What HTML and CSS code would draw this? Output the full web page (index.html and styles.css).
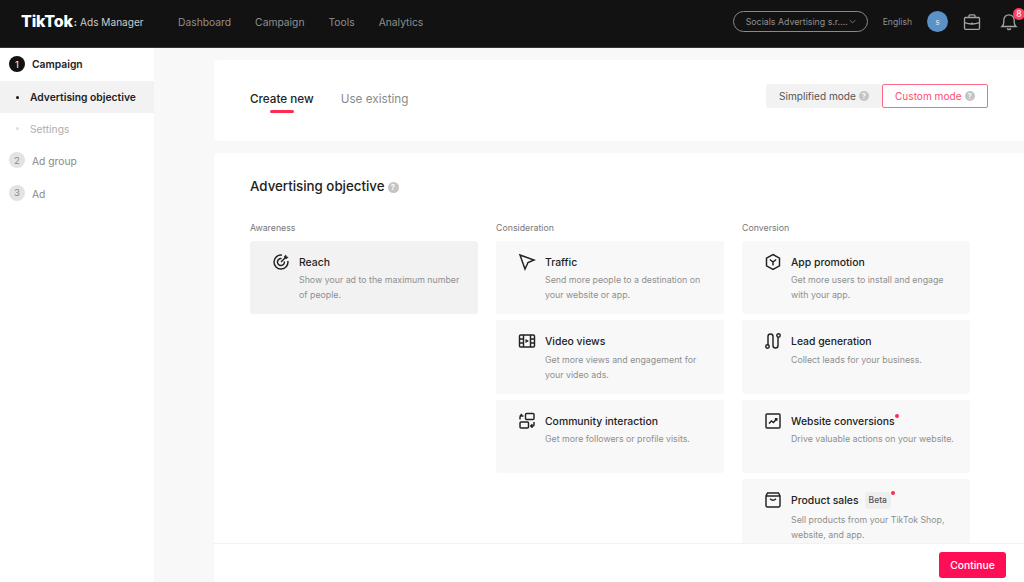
FILE: index.html
```html
<!DOCTYPE html>
<html lang="en">
<head>
<meta charset="utf-8">
<title>TikTok Ads Manager</title>
<link rel="stylesheet" href="styles.css">
</head>
<body>
<header class="topbar">
  <div class="brand"><span class="brand-mark">TikTok</span><span class="brand-colon">:</span><span class="brand-name">Ads Manager</span></div>
  <nav class="topnav">
    <span>Dashboard</span><span>Campaign</span><span>Tools</span><span>Analytics</span>
  </nav>
  <div class="top-right">
    <div class="account"><span class="account-name">Socials Advertising s.r....</span>
      <svg class="chev" viewBox="0 0 10 6"><path d="M1 1l4 4 4-4"/></svg>
    </div>
    <span class="lang">English</span>
    <span class="avatar">s</span>
    <svg class="top-icon" viewBox="0 0 18 18"><path d="M6 4.500V2.800q0-1 1-1h4q1 0 1 1v1.700M2.500 4.500h13q1 0 1 1v9.800q0 1-1 1h-13q-1 0-1-1V5.500q0-1 1-1zM1.500 9.500q7.500 3 15 0"/><circle class="dot" cx="9" cy="10.500" r="1"/></svg>
    <div class="bell">
      <svg class="top-icon" viewBox="0 0 18 18"><path d="M2 13.500q1.800-1.500 1.800-4.500V7a5.200 5.200 0 0 1 10.400 0v2q0 3 1.800 4.500zM7 15.500q2 2 4 0"/></svg>
      <span class="badge">8</span>
    </div>
  </div>
</header>
<div class="shell">
  <aside class="sidebar">
    <div class="step step-on"><span class="num">1</span>Campaign</div>
    <div class="sub sub-on"><i></i>Advertising objective</div>
    <div class="sub sub-off"><i></i>Settings</div>
    <div class="step step-two"><span class="num">2</span>Ad group</div>
    <div class="step"><span class="num">3</span>Ad</div>
  </aside>
  <main class="main">
    <div class="scroll">
      <section class="card tabs-card">
        <div class="tabs">
          <span class="tab tab-on">Create new</span>
          <span class="tab">Use existing</span>
        </div>
        <div class="modes">
          <span class="mode mode-a">Simplified mode<b class="q">?</b></span>
          <span class="mode mode-b">Custom mode<b class="q">?</b></span>
        </div>
      </section>
      <section class="card obj-card">
        <h1>Advertising objective<b class="q q-lg">?</b></h1>
        <div class="cols">
          <div class="col">
            <h2>Awareness</h2>
            <article class="obj obj-sel">
              <svg class="ic" viewBox="0 0 18 18"><path d="M10 2.100A7 7 0 1 0 15.900 8M9.500 5.600A3.500 3.500 0 1 0 12.400 8.500"/><path d="M9 9l4-4"/><path class="fill" d="M12 3.500l2-2 .5 2 2 .5-2 2-2-.5z"/></svg>
              <div><h3>Reach</h3><p>Show your ad to the maximum number of people.</p></div>
            </article>
          </div>
          <div class="col">
            <h2>Consideration</h2>
            <article class="obj">
              <svg class="ic" viewBox="0 0 18 18"><path d="M2 2l14 5-6 2.500L7 16z"/></svg>
              <div><h3>Traffic</h3><p>Send more people to a destination on your website or app.</p></div>
            </article>
            <article class="obj">
              <svg class="ic" viewBox="0 0 18 18"><rect x="1.500" y="3" width="15" height="12" rx="1"/><path d="M5.500 3v12M12.500 3v12M1.500 7h4M1.500 11h4M12.500 7h4M12.500 11h4"/><path class="fill" d="M7.500 7l3.500 2-3.500 2z"/></svg>
              <div><h3>Video views</h3><p>Get more views and engagement for your video ads.</p></div>
            </article>
            <article class="obj">
              <svg class="ic" viewBox="0 0 18 18"><rect x="7.500" y="1.500" width="8.500" height="6" rx="1"/><rect x="2" y="10" width="8.500" height="6" rx="1"/><path d="M2 7.500V5q0-1 1-1h2.500M4 2l-2 2M16 10v3q0 1-1 1h-2.500M14.500 12.200L12.700 14l1.800 1.800"/></svg>
              <div><h3>Community interaction</h3><p>Get more followers or profile visits.</p></div>
            </article>
          </div>
          <div class="col">
            <h2>Conversion</h2>
            <article class="obj">
              <svg class="ic" viewBox="0 0 18 18"><path d="M9 1.500l6.500 3.700v7.600L9 16.500l-6.500-3.700V5.200zM5.800 6.500L9 9l3.200-2.500M9 9v3.500"/></svg>
              <div><h3>App promotion</h3><p>Get more users to install and engage with your app.</p></div>
            </article>
            <article class="obj">
              <svg class="ic" viewBox="0 0 18 18"><circle cx="3.500" cy="14.500" r="1.700"/><circle cx="14.500" cy="3.500" r="1.700"/><path d="M4 12.800V4.500a2.500 2.500 0 0 1 5 0v9a2.500 2.500 0 0 0 5 0V5.200"/></svg>
              <div><h3>Lead generation</h3><p>Collect leads for your business.</p></div>
            </article>
            <article class="obj">
              <svg class="ic" viewBox="0 0 18 18"><rect x="2" y="2" width="14" height="14" rx="1"/><path d="M5 11.500l2.500-2.500 2 1.500 3-3.500M10.800 6.800h2v2"/></svg>
              <div><h3 class="dotted">Website conversions</h3><p>Drive valuable actions on your website.</p></div>
            </article>
            <article class="obj">
              <svg class="ic" viewBox="0 0 18 18"><path d="M3.500 2h11l1.500 3v9.500q0 1.500-1.500 1.500h-11Q2 16 2 14.500V5zM2 5h14M6 7.800q3 3 6 0"/></svg>
              <div><h3 class="dotted dotted-beta">Product sales<span class="beta">Beta</span></h3><p>Sell products from your TikTok Shop, website, and app.</p></div>
            </article>
          </div>
        </div>
      </section>
    </div>
    <footer class="footer"><button class="continue" type="button">Continue</button></footer>
  </main>
</div>
</body>
</html>
```
FILE: styles.css
```css
* { box-sizing: border-box; }
html, body { margin: 0; height: 582px; overflow: hidden; }
body { font-family: Inter, "Liberation Sans", sans-serif; background: #f8f8f8; color: #222; display: flex; flex-direction: column; }
h1, h2, h3, p { margin: 0; font-weight: 500; }

.topbar { height: 48px; flex: none; background: #121212; display: flex; align-items: center; padding: 0 0 4px 21px; border-bottom: 1px solid #333; }
.brand { display: flex; align-items: center; width: 157px; color: #fff; }
.brand-mark { font-size: 16px; font-weight: 800; letter-spacing: -0.2px; margin-top: -2px; }
.brand-colon { font-size: 10px; font-weight: 700; margin: 0 3px 0 1px; color: #7fd; }
.brand-name { font-size: 10.100px; color: #ccc; }
.topnav { display: flex; gap: 24px; font-size: 10.300px; color: #8f8f8f; }
.top-right { margin-left: auto; display: flex; align-items: center; }
.account { width: 135px; height: 21px; border: 1px solid #8a8a8a; border-radius: 11px; display: flex; align-items: center; justify-content: space-between; padding: 0 11px 0 12px; font-size: 8.800px; color: #8f8f8f; }
.account-name { white-space: nowrap; }
.chev { width: 7px; height: 5px; fill: none; stroke: #999; stroke-width: 1; }
.lang { margin-left: 15px; font-size: 8.600px; color: #8f8f8f; }
.avatar { margin-left: 15px; width: 21px; height: 21px; border-radius: 50%; background: #5a91c6; color: #e8e8e8; font-size: 8px; display: flex; align-items: center; justify-content: center; }
.top-icon { width: 18px; height: 18px; fill: none; stroke: #a5a5a5; stroke-width: 1.300; margin-left: 15px; display: block; }
.top-icon .dot { fill: #a5a5a5; stroke: none; }
.bell { position: relative; margin-right: 6px; margin-left: 4px; }
.badge { position: absolute; top: -5px; right: -7px; width: 12px; height: 12px; border-radius: 50%; background: #fe3f66; color: #fff; font-size: 8.500px; display: flex; align-items: center; justify-content: center; }

.shell { flex: 1; display: flex; min-height: 0; }
.sidebar { width: 154px; flex: none; background: #fff; font-size: 10.300px; }
.step { display: flex; align-items: center; gap: 7px; padding-left: 9px; color: #8a8a8a; height: 33px; }
.step-on { color: #222; font-weight: 600; padding-bottom: 1px; }
.step-two { height: 32px; }
.num { width: 16px; height: 16px; border-radius: 50%; background: #e3e3e3; color: #8a8a8a; font-size: 9.500px; font-weight: 400; display: flex; align-items: center; justify-content: center; margin-top: -2px; }
.step-on .num { background: #121212; color: #fff; margin-top: 0; }
.sub { height: 32px; display: flex; align-items: center; padding-left: 16px; }
.sub i { width: 3px; height: 3px; border-radius: 50%; background: #121212; margin-right: 11px; }
.sub-on { background: #f2f2f2; font-weight: 600; color: #222; }
.sub-off { color: #aeaeae; padding-bottom: 1px; }
.sub-off i { background: #ddd; }

.main { flex: 1; min-width: 0; padding-left: 60px; display: flex; flex-direction: column; }
.scroll { flex: 1; min-height: 0; overflow: hidden; padding-top: 12px; display: flex; flex-direction: column; gap: 12px; }
.card { background: #fff; border-radius: 4px 0 0 4px; flex: none; }
.tabs-card { height: 81px; display: flex; justify-content: space-between; padding: 24px 36px 0; }
.tabs { display: flex; gap: 27px; font-size: 11.700px; color: #8a8a8a; padding-top: 8px; }
.tab-on { color: #222; font-weight: 500; position: relative; height: 22px; }
.tab-on::after { content: ""; position: absolute; left: 20px; width: 24px; height: 3px; top: 18px; background: #fe2c55; border-radius: 2px; }
.modes { display: flex; height: 24px; font-size: 10.100px; }
.mode { display: flex; align-items: center; gap: 3px; border-radius: 2px; }
.mode-a { background: #f2f2f2; color: #555; width: 116px; padding-left: 13px; }
.mode-b { border: 1px solid #fe6785; color: #fe4c70; width: 106px; padding-left: 12px; }
.q { width: 10px; height: 10px; border-radius: 50%; background: #c4c4c4; color: #fff; font-size: 7px; font-weight: 600; display: inline-flex; align-items: center; justify-content: center; }
.q-lg { width: 11px; height: 11px; font-size: 8px; margin-left: 3px; vertical-align: 1px; }
.obj-card { padding: 25px 36px 0; }
h1 { font-size: 13.300px; font-weight: 500; color: #222; line-height: 17px; }
.cols { display: flex; gap: 18px; margin-top: 27px; }
.col { width: 228px; display: flex; flex-direction: column; gap: 5.900px; }
h2 { font-size: 8.800px; font-weight: 400; color: #777; line-height: 12px; margin-bottom: 1px; }
.obj { height: 73.500px; background: #f8f8f8; border-radius: 3px; padding: 15px 12px 0 22px; display: flex; gap: 9px; }
.obj-sel { background: #f2f2f2; }
.ic { width: 18px; height: 18px; flex: none; fill: none; stroke: #222; stroke-width: 1.450; margin-top: -3px; }
.ic .fill { fill: #222; stroke: none; }
h3 { font-size: 10.400px; font-weight: 500; color: #222; line-height: 14px; display: flex; align-items: center; }
.obj p { font-size: 8.800px; font-weight: 400; color: #8f8f8f; line-height: 15px; margin-top: 2.500px; }
.dotted { position: relative; width: max-content; }
.dotted::after { content: ""; position: absolute; right: -4px; top: -1px; width: 4px; height: 4px; border-radius: 50%; background: #fe2c55; }
.dotted-beta { margin-top: -2px; }
.beta { margin-left: 6px; background: #eee; border-radius: 3px; padding: 2px 4px; font-size: 8.500px; color: #555; line-height: 13px; }

.footer { height: 39px; flex: none; background: #fff; border-top: 1px solid #f2f2f2; display: flex; justify-content: flex-end; align-items: flex-start; padding: 8px 18px 0 0; }
.continue { width: 67px; height: 26px; border: 0; border-radius: 3px; background: #fe0f55; color: #fff; font: 500 10.300px Inter, "Liberation Sans", sans-serif; padding: 0; }
```
